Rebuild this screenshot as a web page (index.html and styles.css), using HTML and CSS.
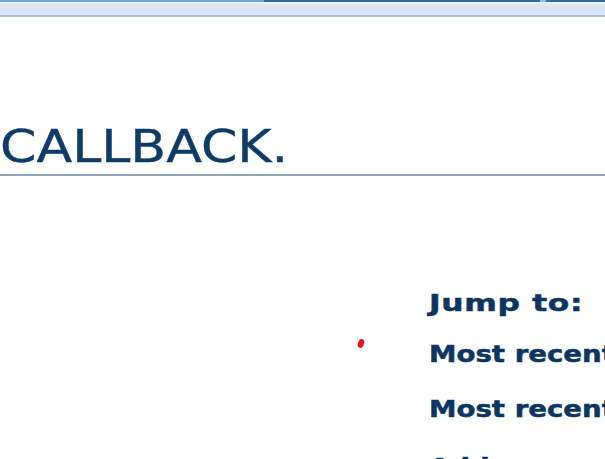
FILE: index.html
```html
<!DOCTYPE html>
<html>
<head>
<meta charset="utf-8">
<link rel="stylesheet" href="styles.css">
</head>
<body>
<div class="topbar">
  <div class="tabs">
    <div class="tab tab-light"></div>
    <div class="tab tab-dark"></div>
    <div class="tab tab-gap"></div>
    <div class="tab tab-dark tab-end"></div>
  </div>
  <div class="bar-white"></div>
  <div class="bar-pale"></div>
  <div class="bar-line"></div>
</div>
<h1 class="title"><span class="title-text">CALLBACK.</span></h1>
<div class="content">
  <div class="main">
    <span class="dot"></span>
  </div>
  <div class="sidebar">
    <h3 class="jump">Jump to:</h3>
    <ul class="links">
      <li><a class="link" href="#">Most recent comment</a></li>
      <li><a class="link" href="#">Most recent trackback</a></li>
      <li class="last"><a class="link" href="#">Add your comment</a></li>
    </ul>
  </div>
</div>
</body>
</html>
```
FILE: styles.css
```css
html, body {
  margin: 0;
  padding: 0;
  background: #ffffff;
  width: 605px;
  height: 459px;
  overflow: hidden;
}

.topbar {
  display: flex;
  flex-direction: column;
}
.tabs {
  display: flex;
  height: 2px;
}
.tab-light { width: 264px; background: #63aae2; }
.tab-dark { width: 276px; background: #2a71a8; }
.tab-gap { width: 6px; background: #8cc0e8; }
.tab-end { flex: 1; }
.bar-white { height: 2px; background: #eef4fb; }
.bar-pale { height: 11px; background: #d8e6f5; }
.bar-line { height: 2px; background: #a9bfd4; }

.title {
  margin: 107px 0 0;
  padding: 0 0 5px;
  font-family: "DejaVu Sans", Verdana, sans-serif;
  font-weight: normal;
  font-size: 45px;
  line-height: 45px;
  color: #0f3b68;
  border-bottom: 2px solid #8fa7bd;
  white-space: nowrap;
}
.title-text {
  display: inline-block;
  transform: scaleX(1.16);
  transform-origin: left center;
  -webkit-text-stroke: 0.4px #0f3b68;
}

.content {
  display: flex;
}
.main {
  width: 429px;
  flex: none;
}
.dot {
  display: block;
  width: 6px;
  height: 9px;
  margin: 163px 0 0 358px;
  border-radius: 50%;
  background: #e8131a;
  transform: rotate(20deg);
}
.sidebar {
  flex: 1;
  padding-top: 115px;
  font-family: "DejaVu Sans", Verdana, sans-serif;
  font-weight: bold;
  font-size: 23px;
  line-height: 24px;
  color: #0c3561;
  white-space: nowrap;
}
.jump {
  display: inline-block;
  margin: 0 0 27px;
  font-size: 23px;
  line-height: 24px;
  letter-spacing: 0.5px;
  transform: scaleX(1.36);
  transform-origin: left center;
  -webkit-text-stroke: 0.5px #0c3561;
}
.links {
  list-style: none;
  margin: 0;
  padding: 0;
  display: flex;
  flex-direction: column;
  gap: 31px;
}
.links .last {
  margin-top: 3px;
}
.link {
  display: inline-block;
  color: #0c3561;
  text-decoration: none;
  transform: scaleX(1.2);
  transform-origin: left center;
  -webkit-text-stroke: 0.5px #0c3561;
}
```
